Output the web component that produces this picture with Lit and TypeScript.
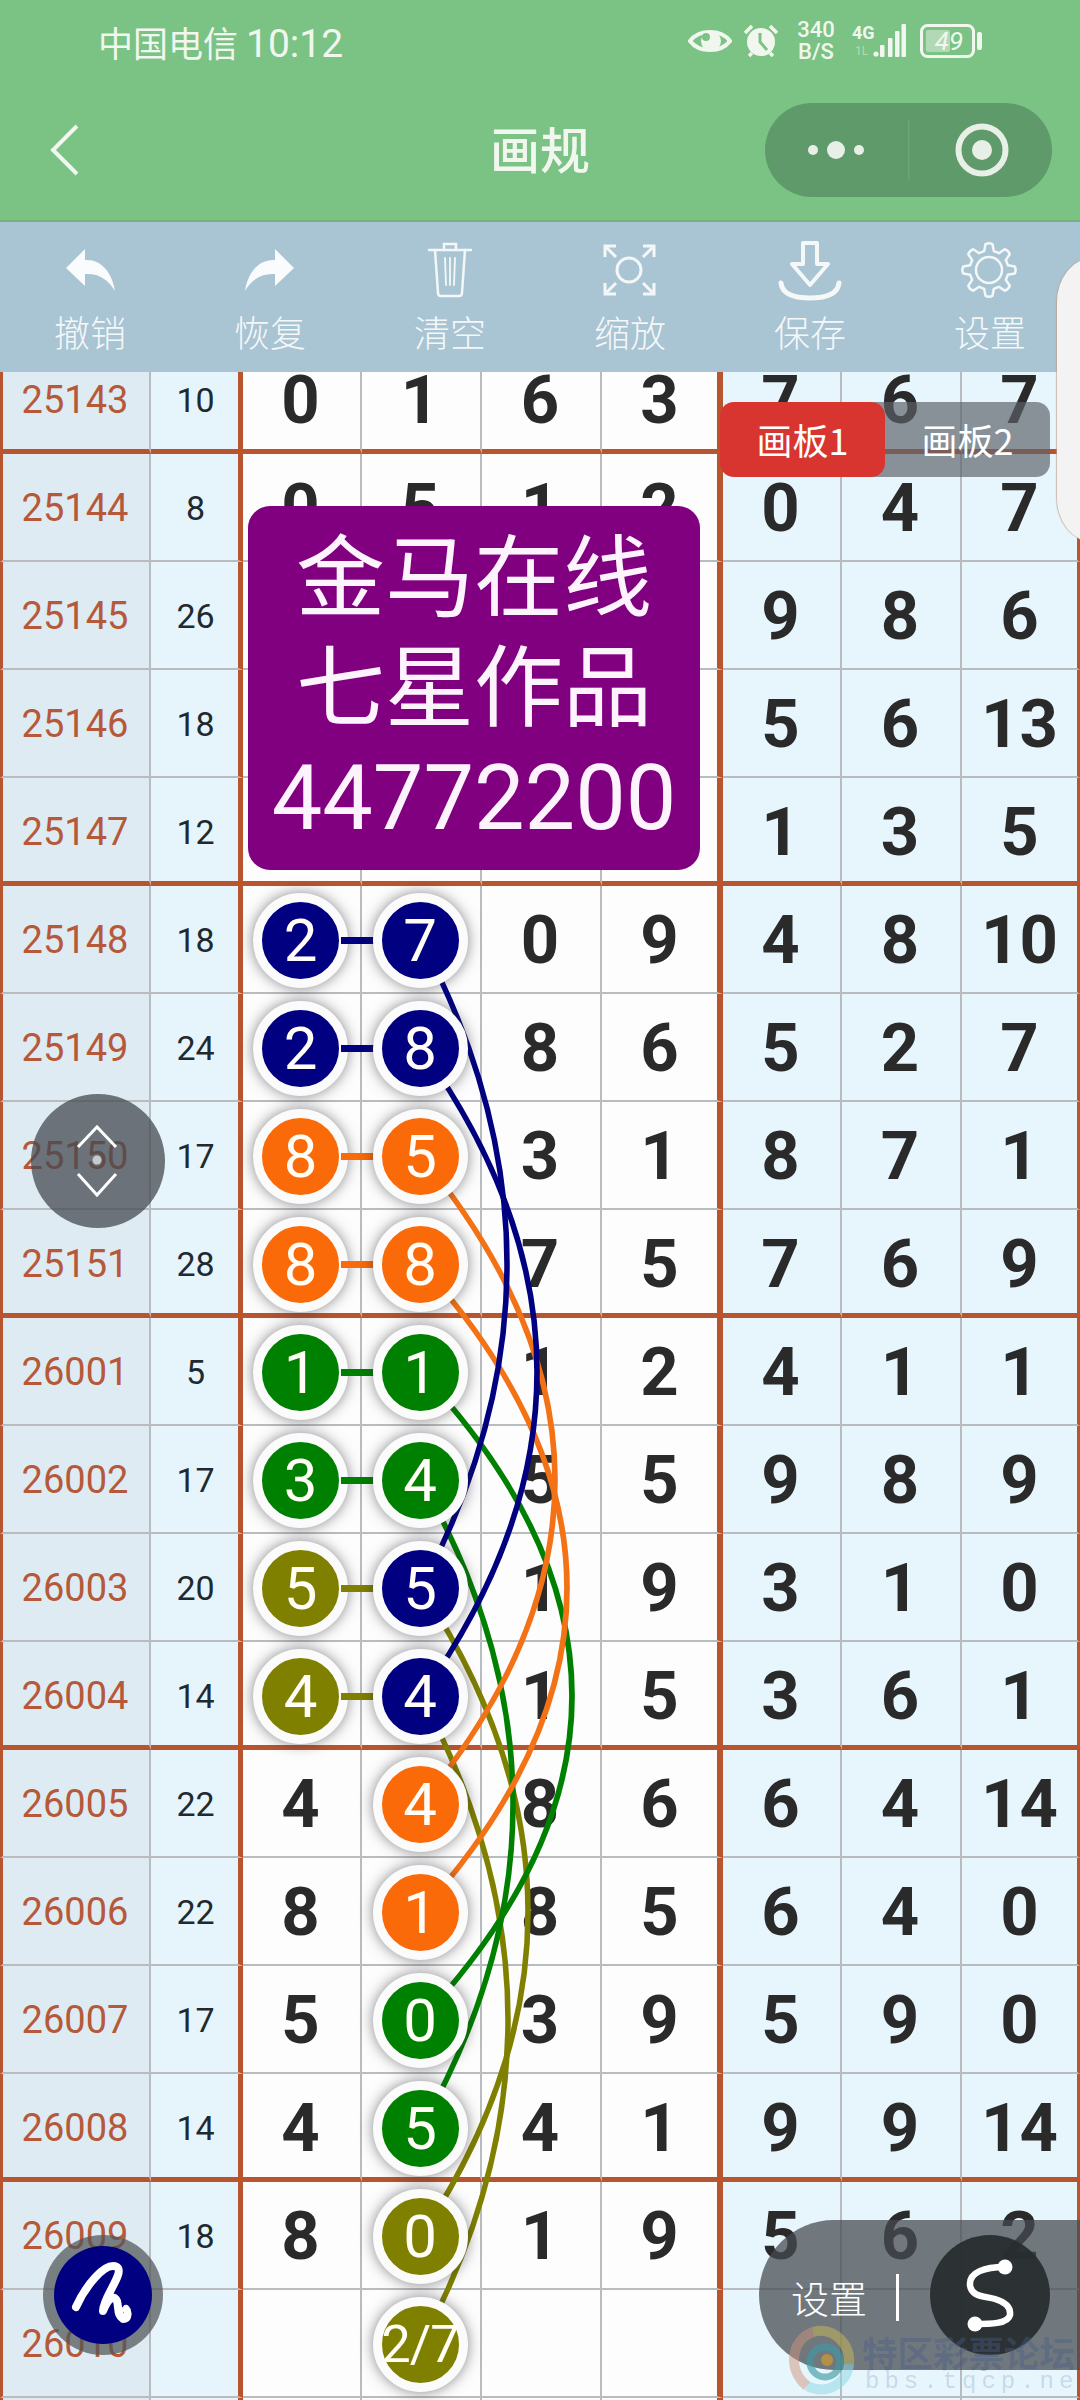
import { LitElement, html, css, svg } from "lit";
import { customElement } from "lit/decorators.js";

type Row = { id: string; n: string; d: string[]; l?: string; r?: string };
const N = "navy", O = "orange", G = "green", V = "olive";
const rows: Row[] = [
  { id: "25143", n: "10", d: ["0","1","6","3","7","6","7"] },
  { id: "25144", n: "8", d: ["0","5","1","2","0","4","7"] },
  { id: "25145", n: "26", d: ["","","","","9","8","6"] },
  { id: "25146", n: "18", d: ["","","","","5","6","13"] },
  { id: "25147", n: "12", d: ["","","","","1","3","5"] },
  { id: "25148", n: "18", d: ["2","7","0","9","4","8","10"], l: N, r: N },
  { id: "25149", n: "24", d: ["2","8","8","6","5","2","7"], l: N, r: N },
  { id: "25150", n: "17", d: ["8","5","3","1","8","7","1"], l: O, r: O },
  { id: "25151", n: "28", d: ["8","8","7","5","7","6","9"], l: O, r: O },
  { id: "26001", n: "5", d: ["1","1","1","2","4","1","1"], l: G, r: G },
  { id: "26002", n: "17", d: ["3","4","5","5","9","8","9"], l: G, r: G },
  { id: "26003", n: "20", d: ["5","5","1","9","3","1","0"], l: V, r: N },
  { id: "26004", n: "14", d: ["4","4","1","5","3","6","1"], l: V, r: N },
  { id: "26005", n: "22", d: ["4","4","8","6","6","4","14"], r: O },
  { id: "26006", n: "22", d: ["8","1","8","5","6","4","0"], r: O },
  { id: "26007", n: "17", d: ["5","0","3","9","5","9","0"], r: G },
  { id: "26008", n: "14", d: ["4","5","4","1","9","9","14"], r: G },
  { id: "26009", n: "18", d: ["8","0","1","9","5","6","2"], r: V },
  { id: "26010", n: "", d: ["","2/7","","","","",""], r: V },
  { id: "", n: "", d: ["","","","","","",""] },
];
const thick = new Set(["25143", "25147", "25151", "26004", "26008"]);

const curves: [string, number, number, number][] = [
  ["#808000", 1588, 2236, 528], ["#808000", 1696, 2344, 508],
  ["#008000", 1372, 2020, 572], ["#008000", 1480, 2128, 513],
  ["#f47216", 1156, 1804, 555], ["#f47216", 1264, 1912, 567],
  ["#000080", 940, 1588, 507], ["#000080", 1048, 1696, 537],
];

function gearPath(cx: number, cy: number, teeth: number, ro: number, ri: number): string {
  const pts: string[] = [];
  const step = (Math.PI * 2) / teeth;
  for (let i = 0; i < teeth; i++) {
    const a = i * step - Math.PI / 2;
    const p = (r: number, t: number) => `${(cx + r * Math.cos(a + t)).toFixed(1)} ${(cy + r * Math.sin(a + t)).toFixed(1)}`;
    pts.push(`${i === 0 ? "M" : "L"}${p(ri, -step * 0.32)} L${p(ro, -step * 0.17)} Q${p(ro + 1.5, 0)} ${p(ro, step * 0.17)} L${p(ri, step * 0.32)}`);
  }
  return pts.join(" ") + " Z";
}

@customElement("app-root")
export class AppRoot extends LitElement {
  static styles = css`
    :host { display: block; position: relative; width: 1080px; height: 2400px; overflow: hidden; background: #fff;
      font-family: Roboto, "Noto Sans CJK SC", sans-serif; }
    .head { height: 222px; background: #7bc285; border-bottom: 2px solid #74b17f; box-sizing: border-box; color: #f1f7ee; display: flex; flex-direction: column; }
    .status { height: 80px; display: flex; align-items: center; padding: 2px 97px 0 98px; box-sizing: border-box; }
    .carrier { font-size: 35px; flex: 1; white-space: nowrap; }
    .carrier b { font-weight: 400; font-size: 39px; margin-left: 8px; }
    .sicons { display: flex; align-items: center; }
    .sicons svg { display: block; }
    .speed { width: 40px; margin: 0 16px 0 18px; text-align: center; font-size: 22px; line-height: 22px; font-weight: 500; }
    .nav { flex: 1; display: flex; align-items: center; position: relative; justify-content: center; padding-bottom: 6px; box-sizing: border-box; }
    .title { font-size: 50px; font-weight: 500; font-family: "Noto Sans CJK SC", sans-serif; line-height: 1; }
    .back { position: absolute; left: 50px; top: 43px; }
    .capsule { position: absolute; left: 765px; top: 23px; width: 287px; height: 94px; }
    .tools { height: 150px; background: #a9c4d3; display: grid; grid-template-columns: repeat(6, 180px); color: #f4f7f8; }
    .tool { display: flex; flex-direction: column; align-items: center; padding-top: 19px; box-sizing: border-box; }
    .tool svg { display: block; }
    .tool span { font-size: 36px; line-height: 46px; margin-top: 7px; font-family: "Noto Sans CJK SC", sans-serif; font-weight: 300; }
    .table { height: 2028px; overflow: hidden; }
    .row { display: grid; grid-template-columns: 151px 92px 119px 120px 120px 121px 119px 120px 118px; height: 108px; }
    .row.first { margin-top: -26px; }
    .c { box-sizing: border-box; border-bottom: 2px solid #b9bcbe; border-right: 2px solid #b9bcbe; padding-top: 2px; display: flex; align-items: center; justify-content: center; }
    .row.thick .c { border-bottom: 5px solid #b8552f; padding-top: 5px; }
    .id { background: #deebf3; border-left: 3px solid #b8552f; color: #b5593a; font-size: 38px; padding-right: 2px; }
    .n { background: #e6f5fb; color: #1f2a30; font-size: 34px; border-right: 5px solid #b8552f; padding-left: 2px; }
    .dg { font-size: 67px; font-weight: 700; color: #2a2a2a; padding-right: 2px; background: #fdfdfd; }
    .dg.blue { background: #e6f6fc; }
    .dg.edge { border-right: 6px solid #b8552f; padding-right: 0; }
    .dg.last { border-right: 3px solid #b8552f; padding-right: 0; }
    .ball { position: relative; z-index: 2; width: 95px; height: 95px; box-sizing: border-box; border: 9px solid #fbfbfb; border-radius: 50%;
      box-shadow: 0 0 14px rgba(40,40,50,.55); color: #fffdf5; font-size: 60px; font-weight: 400; display: flex; align-items: center; justify-content: center; flex: none; }
    .ball.small { font-size: 52px; letter-spacing: -1px; white-space: nowrap; }
    .navy { background: #000080; } .orange { background: #fb6a08; } .green { background: #008000; } .olive { background: #808000; }
    .link { position: absolute; left: 100%; top: 50%; width: 36px; height: 7px; margin-top: -3.5px; margin-left: 2px; z-index: -1; }
    .curves { position: absolute; left: 0; top: 0; z-index: 1; pointer-events: none; }
    .notice { position: absolute; z-index: 3; left: 248px; top: 506px; width: 452px; height: 364px; background: #800080; border-radius: 22px; color: #fdf3fd;
      display: flex; flex-direction: column; align-items: center; justify-content: center; box-sizing: border-box; padding-bottom: 6px; font-size: 89px; line-height: 110px; font-family: "Noto Sans CJK SC", sans-serif; }
    .notice .num { font-family: Roboto, sans-serif; font-size: 90px; margin-top: 8px; }
    .tab { position: absolute; top: 402px; height: 75px; display: flex; align-items: center; justify-content: center; color: #fff; font-size: 36px; padding-bottom: 2px; font-family: "Noto Sans CJK SC", sans-serif; font-weight: 400; z-index: 4; box-sizing: border-box; }
    .tab.on { left: 720px; width: 165px; background: #d83530; border-radius: 14px; z-index: 5; }
    .tab.off { left: 860px; width: 190px; padding-left: 25px; background: rgba(92,98,104,.68); border-radius: 14px; }
    .panel { position: absolute; z-index: 6; left: 1057px; top: 258px; width: 40px; height: 284px; background: #f4f3f3; border-radius: 36px 0 0 36px / 44px 0 0 44px; box-shadow: -1px 0 1px rgba(190,160,140,.7); }
    .scroll { position: absolute; z-index: 6; left: 31px; top: 1094px; width: 134px; height: 134px; border-radius: 50%; background: rgba(66,72,78,.74); }
    .pen { position: absolute; z-index: 6; left: 43px; top: 2235px; width: 120px; height: 120px; border-radius: 50%; background: rgba(80,84,88,.72); display: flex; align-items: center; justify-content: center; }
    .pen i { width: 98px; height: 98px; border-radius: 50%; background: #000080; display: block; }
    .penicon { position: absolute; left: 0; top: 0; }
    .menu { position: absolute; z-index: 6; left: 759px; top: 2220px; width: 321px; height: 150px; border-radius: 75px 0 0 75px; background: rgba(70,76,82,.74); display: flex; align-items: center; color: #fff; box-sizing: border-box; padding-left: 32px; }
    .menu span { font-size: 38px; font-family: "Noto Sans CJK SC", sans-serif; font-weight: 300; line-height: 1; margin-top: 4px; }
    .menu u { display: block; width: 3px; height: 47px; background: #fff; margin-left: 29px; margin-top: 4px; }
    .menu .s { position: absolute; left: 171px; top: 15px; width: 120px; height: 120px; border-radius: 50%; background: rgba(38,44,46,.92); }
    .menu svg { position: absolute; left: 0; top: 0; }
    .wm { position: absolute; z-index: 7; left: 785px; top: 2322px; width: 295px; height: 78px; pointer-events: none; }
    .wm svg { position: absolute; left: 0; top: 0; }
    .wmt { position: absolute; left: 77px; top: 12px; font-size: 35.5px; line-height: 1; font-weight: 700; color: rgba(72,92,135,.42); font-family: "Noto Sans CJK SC", sans-serif; white-space: nowrap; }
    .wmu { position: absolute; left: 80px; top: 48px; font-size: 24px; line-height: 1; color: rgba(120,145,185,.28); font-family: "Liberation Mono", monospace; letter-spacing: 5px; white-space: nowrap; }
  `;

  private statusIcons() {
    return html`<div class="sicons">
      <svg width="44" height="30" viewBox="0 0 44 30"><path d="M2 15C11 3 33 3 42 15C33 27 11 27 2 15Z" fill="none" stroke="#f1f7ee" stroke-width="4"/><circle cx="23" cy="15" r="10" fill="#f1f7ee"/><circle cx="18" cy="11" r="4" fill="#7bc285"/></svg>
      <svg style="margin-left:12px" width="34" height="34" viewBox="0 0 34 34"><circle cx="17" cy="18" r="14" fill="#f1f7ee"/><path d="M16 9V18L23 26" fill="none" stroke="#7bc285" stroke-width="3"/><path d="M1 9L8 2M33 9L26 2M5 32L8 29M29 32L26 29" stroke="#f1f7ee" stroke-width="3.5"/></svg>
      <div class="speed">340<br />B/S</div>
      <svg width="54" height="36" viewBox="0 0 54 36"><text x="0" y="16" font-size="18" font-weight="700" font-family="Roboto" fill="#f1f7ee">4G</text><text x="3" y="32" font-size="12" font-family="Roboto" fill="#f1f7ee" opacity=".45">1L</text><circle cx="24" cy="31" r="2.6" fill="#f1f7ee"/><rect x="28" y="22" width="4.5" height="12" rx="1" fill="#f1f7ee"/><rect x="36" y="15" width="4.5" height="19" rx="1" fill="#f1f7ee"/><rect x="43" y="8" width="4.5" height="26" rx="1" fill="#f1f7ee"/><rect x="49.5" y="1" width="4.5" height="33" rx="1" fill="#f1f7ee"/></svg>
      <svg style="margin-left:14px" width="63" height="34" viewBox="0 0 63 34"><rect x="1.5" y="1.5" width="52" height="31" rx="6" fill="none" stroke="#f1f7ee" stroke-width="3"/><rect x="6" y="6" width="24" height="22" rx="2" fill="#f1f7ee" opacity=".45"/><text x="29" y="26" text-anchor="middle" font-size="26" font-style="italic" font-family="Roboto" fill="#f1f7ee">49</text><rect x="57" y="8" width="5" height="18" rx="2" fill="#f1f7ee"/></svg>
    </div>`;
  }

  private toolIcon(k: string) {
    const common = { w: 70, h: 60 };
    let inner;
    if (k === "undo" || k === "redo") {
      const t = k === "redo" ? "translate(70,5) scale(-1,1)" : "translate(0,5)";
      inner = svg`<g transform=${t}><path d="M11 22L30 3L30 14C46 13 57 26 60 45C53 33 43 27 30 28L30 40Z" fill="#fafbfc"/></g>`;
    } else if (k === "trash") {
      inner = svg`<g fill="none" stroke="#f4f7f8" stroke-width="2.5" stroke-linecap="round"><path d="M14 9H56"/><path d="M29 9V3H41V9"/><path d="M20 9L23 52Q23 55 26 55H44Q47 55 47 52L50 9"/><path d="M30 17L31 44M35 17V44M40 17L39 44" stroke-width="1.8"/></g>`;
    } else if (k === "zoom") {
      inner = svg`<g fill="none" stroke="#f4f7f8" stroke-width="3"><circle cx="34" cy="29" r="12"/><path d="M10 16V5H21M10 5L21 16M59 16V5H48M59 5L48 16M10 42V53H21M10 53L21 42M59 42V53H48M59 53L48 42"/></g>`;
    } else if (k === "save") {
      inner = svg`<g fill="none" stroke="#f6f8f8" stroke-width="4" stroke-linejoin="round" stroke-linecap="round"><path d="M28 2H42V23H53L35 44L17 23H28Z"/><path d="M6 42C7 51 16 57 35 57C54 57 63 51 64 42" stroke-width="5"/></g>`;
    } else {
      inner = svg`<g fill="none" stroke="#f4f7f8" stroke-width="2.5" stroke-linejoin="round"><path d=${gearPath(34, 29, 8, 26, 19.5)}/><circle cx="34" cy="29" r="13"/></g>`;
    }
    return html`<svg width=${common.w} height=${common.h} viewBox="0 0 70 60">${inner}</svg>`;
  }

  private ball(v: string, color: string, link = false) {
    return html`<div class="ball ${color} ${v.length > 1 ? "small" : ""}">${link ? html`<div class="link ${color}"></div>` : ""}${v}</div>`;
  }

  render() {
    const tools: [string, string][] = [["undo","撤销"],["redo","恢复"],["trash","清空"],["zoom","缩放"],["save","保存"],["gear","设置"]];
    return html`
      <div class="head">
        <div class="status">
          <div class="carrier">中国电信<b>10:12</b></div>
          ${this.statusIcons()}
        </div>
        <div class="nav">
          <svg class="back" width="30" height="54" viewBox="0 0 30 54"><path d="M27 3L3 27L27 51" fill="none" stroke="#f1f7ee" stroke-width="4"/></svg>
          <div class="title">画规</div>
          <svg class="capsule" width="287" height="94" viewBox="0 0 287 94">
            <rect width="287" height="94" rx="47" fill="#5f9a6b"/>
            <rect x="143" y="17" width="1.5" height="60" fill="#6ea679"/>
            <circle cx="48" cy="47" r="5" fill="#e8efe6"/><circle cx="71" cy="47" r="9" fill="#e8efe6"/><circle cx="94" cy="47" r="5" fill="#e8efe6"/>
            <circle cx="217" cy="47" r="23.5" fill="none" stroke="#e8efe6" stroke-width="6"/><circle cx="217" cy="47" r="10" fill="#e8efe6"/>
          </svg>
        </div>
      </div>
      <div class="tools">
        ${tools.map(([k, t]) => html`<div class="tool">${this.toolIcon(k)}<span>${t}</span></div>`)}
      </div>
      <div class="table">
        ${rows.map((r, ri) => html`
          <div class="row ${ri === 0 ? "first" : ""} ${thick.has(r.id) ? "thick" : ""}">
            <div class="c id">${r.id}</div>
            <div class="c n">${r.n}</div>
            ${r.d.map((v, i) => {
              const cls = `c dg ${i >= 4 ? "blue" : ""} ${i === 3 ? "edge" : ""} ${i === 6 ? "last" : ""}`;
              if (i === 0 && r.l) return html`<div class=${cls}>${this.ball(v, r.l, true)}</div>`;
              if (i === 1 && r.r) return html`<div class=${cls}>${this.ball(v, r.r)}</div>`;
              return html`<div class=${cls}>${v}</div>`;
            })}
          </div>`)}
      </div>

      <svg class="curves" width="1080" height="2400" viewBox="0 0 1080 2400">
        ${curves.map(([c, a, b, m]) => svg`<path d="M421 ${a}Q${421 + 2 * (m - 421)} ${(a + b) / 2} 421 ${b}" fill="none" stroke=${c} stroke-width="5.5"/>`)}
      </svg>

      <div class="notice"><div>金马在线</div><div>七星作品</div><div class="num">44772200</div></div>
      <div class="tab on">画板1</div>
      <div class="tab off">画板2</div>
      <div class="panel"></div>

      <div class="scroll">
        <svg width="134" height="134" viewBox="0 0 134 134"><g fill="none" stroke="#fff" stroke-width="3"><path d="M47 53L66 33L85 53"/><path d="M47 80L66 101L85 80"/></g><circle cx="66" cy="66" r="4.5" fill="#e4e7e9" opacity=".75"/></svg>
      </div>

      <div class="pen"><i></i>
        <svg class="penicon" width="120" height="120" viewBox="0 0 120 120"><path d="M33 72C42 52 62 26 74 32C82 38 60 62 60 76C64 66 70 58 74 66C76 74 74 80 80 84C86 84 85 76 83 74" fill="none" stroke="#fff" stroke-width="8" stroke-linecap="round" stroke-linejoin="round"/></svg>
      </div>

      <div class="menu">
        <span>设置</span><u></u>
        <div class="s"></div>
        <svg width="321" height="150" viewBox="0 0 321 150"><path d="M246 47C226 47 210 52 211 65C212 77 226 76 236 79C246 82 252 87 251 95C249 104 231 104 216 104" fill="none" stroke="#fff" stroke-width="6.5" stroke-linecap="round"/><circle cx="246" cy="47" r="7.5" fill="#fff"/><circle cx="216" cy="104" r="7.5" fill="#fff"/></svg>
      </div>

      <div class="wm">
        <svg width="80" height="78" viewBox="0 0 80 78">
          <g fill="none">
            <path d="M28 10C6 18 2 48 22 64" stroke="#d0917c" stroke-width="10" opacity=".5"/>
            <path d="M28 10C48 4 66 22 64 42" stroke="#c9ba52" stroke-width="10" opacity=".5"/>
            <path d="M64 42C62 60 44 74 22 64" stroke="#8fd7e6" stroke-width="10" opacity=".55"/>
            <circle cx="40" cy="40" r="15" stroke="#3f9aa5" stroke-width="7" opacity=".65"/>
            <circle cx="42" cy="38" r="6" fill="#d29a30" opacity=".7"/>
          </g>
        </svg>
        <div class="wmt">特区彩票论坛</div>
        <div class="wmu">bbs.tqcp.net</div>
      </div>
    `;
  }
}
